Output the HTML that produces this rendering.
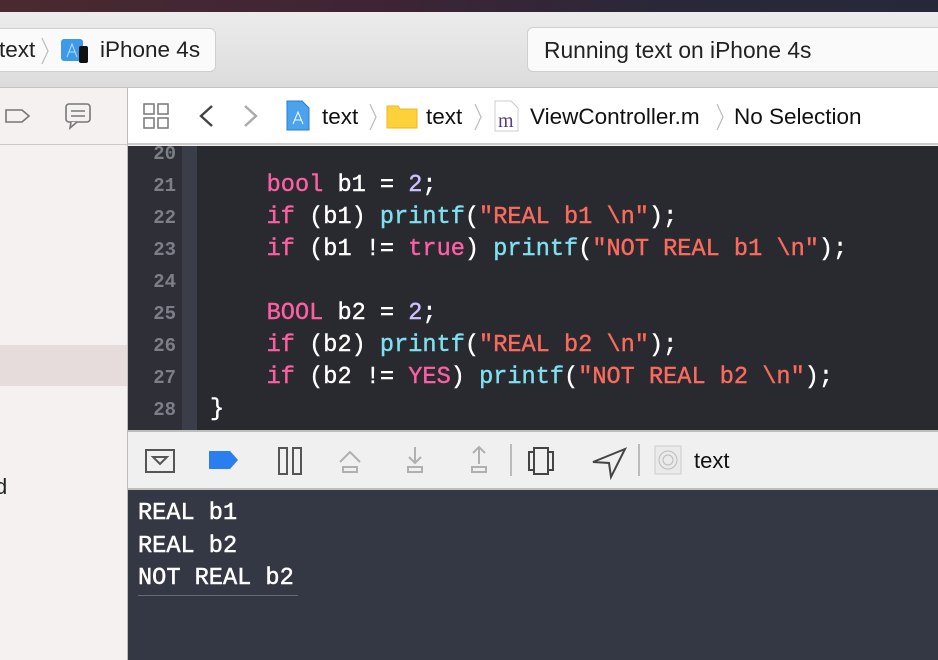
<!DOCTYPE html>
<html><head><meta charset="utf-8"><style>
*{margin:0;padding:0;box-sizing:border-box}
body{width:938px;height:660px;overflow:hidden;position:relative;background:#f4f1f0;font-family:"Liberation Sans",sans-serif}
.abs{position:absolute}
.mono{font-family:"Liberation Mono",monospace}
</style></head><body>
<div class="abs" style="left:0;top:0;width:938px;height:12px;background:linear-gradient(90deg,#4a2a30,#3e2434 40%,#2a2838 70%,#26283a)"></div>
<div class="abs" style="left:0;top:12px;width:938px;height:76px;background:linear-gradient(#ececec,#dcdcdc);border-bottom:1px solid #c4c4c4"></div>
<div class="abs" style="left:-10px;top:28px;width:226px;height:44px;background:#fafafa;border:1px solid #cfcfcf;border-radius:6px"></div>
<div class="abs" style="left:-1px;top:37px;font-size:22.5px;color:#222">text</div>
<svg class="abs" style="left:40px;top:36px" width="10" height="30"><path d="M2 2 L8 15 L2 28" stroke="#bbb" fill="none" stroke-width="1.2"/></svg>
<svg class="abs" style="left:60px;top:37px" width="32" height="28"><rect x="1" y="2" width="22" height="22" rx="3" fill="#3c9ae8"/><path d="M7 20 L12 7 L17 20 M9 15 H15" stroke="#bfe0ff" fill="none"/><rect x="19" y="9" width="9" height="17" rx="2" fill="#111"/></svg>
<div class="abs" style="left:100px;top:37px;font-size:22.5px;color:#222">iPhone 4s</div>
<div class="abs" style="left:527px;top:27px;width:430px;height:45px;background:#fafafa;border:1px solid #cfcfcf;border-radius:6px"></div>
<div class="abs" style="left:544px;top:37px;font-size:22.8px;color:#222">Running text on iPhone 4s</div>
<div class="abs" style="left:0;top:88px;width:127px;height:57px;background:#f4f1f0;border-bottom:1px solid #cbcbcb"></div>
<svg class="abs" style="left:0;top:100px" width="110" height="34"><path d="M6 10 H22 L29 16 L22 22 H6 Z" stroke="#777" fill="none" stroke-width="1.6"/><rect x="66" y="4" width="24" height="18" rx="3" stroke="#777" fill="none" stroke-width="1.6"/><path d="M71 22 L70 28 L77 22" stroke="#777" fill="#f4f1f0" stroke-width="1.6"/><path d="M71 11 H85 M71 16 H85" stroke="#777" stroke-width="1.6"/></svg>
<div class="abs" style="left:0;top:345px;width:127px;height:41px;background:#e6dcdc"></div>
<div class="abs" style="left:-5px;top:474px;font-size:22px;color:#222">d</div>
<div class="abs" style="left:127px;top:88px;width:1px;height:572px;background:#bdbdbd"></div>
<div class="abs" style="left:128px;top:88px;width:810px;height:57px;background:#fff;border-bottom:2px solid #cbcbcb"></div>
<svg class="abs" style="left:140px;top:100px" width="140" height="34"><g stroke="#777" fill="none" stroke-width="1.5"><rect x="4" y="4" width="10" height="10"/><rect x="18" y="4" width="10" height="10"/><rect x="4" y="18" width="10" height="10"/><rect x="18" y="18" width="10" height="10"/></g><path d="M72 6 L61 16 L72 26" stroke="#444" stroke-width="2.4" fill="none"/><path d="M105 6 L116 16 L105 26" stroke="#aaa" stroke-width="2.4" fill="none"/></svg>
<svg class="abs" style="left:284px;top:100px" width="30" height="32"><path d="M3 1 H18 L25 8 V30 H3 Z" fill="#4aa3ec" stroke="#2a7fc6"/><path d="M9 24 L14 12 L19 24 M11 20 H17" stroke="#fff" fill="none"/></svg>
<div class="abs" style="left:322px;top:104px;font-size:22.5px;color:#111">text</div>
<svg class="abs" style="left:368px;top:102px" width="10" height="30"><path d="M2 2 L8 15 L2 28" stroke="#bbb" fill="none" stroke-width="1.2"/></svg>
<svg class="abs" style="left:386px;top:103px" width="32" height="26"><path d="M1 3 H12 L14 6 H31 V25 H1 Z" fill="#fcd13a" stroke="#e9b820"/></svg>
<div class="abs" style="left:426px;top:104px;font-size:22.5px;color:#111">text</div>
<svg class="abs" style="left:473px;top:102px" width="10" height="30"><path d="M2 2 L8 15 L2 28" stroke="#bbb" fill="none" stroke-width="1.2"/></svg>
<svg class="abs" style="left:494px;top:100px" width="26" height="32"><path d="M1 1 H17 L24 8 V31 H1 Z" fill="#fff" stroke="#ccc"/><text x="4" y="27" font-family="Liberation Serif,serif" font-size="20" fill="#5a3d8a">m</text></svg>
<div class="abs" style="left:530px;top:104px;font-size:22.5px;color:#111">ViewController.m</div>
<svg class="abs" style="left:715px;top:102px" width="10" height="30"><path d="M2 2 L8 15 L2 28" stroke="#bbb" fill="none" stroke-width="1.2"/></svg>
<div class="abs" style="left:734px;top:104px;font-size:22.5px;color:#111">No Selection</div>
<div class="abs" style="left:128px;top:146px;width:810px;height:284px;background:#292a30"></div>
<div class="abs" style="left:128px;top:146px;width:54px;height:284px;background:#2f3037"></div>
<div class="abs" style="left:182px;top:146px;width:15px;height:284px;background:#3b3d48"></div>
<div class="abs mono" style="left:128px;top:138px;width:48px;text-align:right;font-size:19px;font-weight:bold;line-height:32px;color:#7d7f88">20<br>21<br>22<br>23<br>24<br>25<br>26<br>27<br>28</div>
<div class="abs mono" style="left:210px;top:170px;font-size:23.6px;line-height:32px;color:#fff;white-space:pre;-webkit-text-stroke:0.4px"><span style="color:#fc5fa3">    bool</span> b1 = <span style="color:#d0bfff">2</span>;
    <span style="color:#fc5fa3">if</span> (b1) <span style="color:#7ee0f0">printf</span>(<span style="color:#fc6a5d">"REAL b1 \n"</span>);
    <span style="color:#fc5fa3">if</span> (b1 != <span style="color:#fc5fa3">true</span>) <span style="color:#7ee0f0">printf</span>(<span style="color:#fc6a5d">"NOT REAL b1 \n"</span>);

    <span style="color:#fc5fa3">BOOL</span> b2 = <span style="color:#d0bfff">2</span>;
    <span style="color:#fc5fa3">if</span> (b2) <span style="color:#7ee0f0">printf</span>(<span style="color:#fc6a5d">"REAL b2 \n"</span>);
    <span style="color:#fc5fa3">if</span> (b2 != <span style="color:#fc5fa3">YES</span>) <span style="color:#7ee0f0">printf</span>(<span style="color:#fc6a5d">"NOT REAL b2 \n"</span>);
}</div>
<div class="abs" style="left:128px;top:430px;width:810px;height:60px;background:#f0f0f0;border-top:2px solid #bdbdbd;border-bottom:2px solid #bdbdbd"></div>
<svg class="abs" style="left:128px;top:432px" width="620" height="56">
<g fill="none" stroke="#555" stroke-width="2"><rect x="18" y="18" width="28" height="22"/><path d="M25 25 H39 L32 32 Z"/><rect x="151" y="16" width="8" height="26"/><rect x="165" y="16" width="8" height="26"/></g>
<path d="M81 19 H102 L110 28 L102 37 H81 Z" fill="#2b7ef0"/>
<g fill="none" stroke="#b0b0b0" stroke-width="2"><path d="M212 30 L222 20 L232 30"/><rect x="215" y="35" width="14" height="5"/><path d="M287 15 V30 M281 25 L287 31 L293 25"/><rect x="280" y="35" width="14" height="5"/><path d="M351 32 V16 M345 21 L351 15 L357 21"/><rect x="344" y="35" width="14" height="5"/></g>
<path d="M383 12 V44 M511 12 V44" stroke="#bbb" stroke-width="2"/>
<g fill="none" stroke="#444" stroke-width="2"><rect x="406" y="16" width="14" height="26"/><path d="M406 20 H401 V38 H406 M420 20 H425 V38 H420"/><path d="M497 17 L465 30 L481 31 L483 45 Z"/></g>
<rect x="527" y="14" width="26" height="28" fill="#eaeaea" stroke="#ccc"/><circle cx="540" cy="28" r="9" fill="none" stroke="#bbb"/><circle cx="540" cy="28" r="5" fill="none" stroke="#bbb"/>
<text x="566" y="36" font-family="Liberation Sans,sans-serif" font-size="22" fill="#111">text</text>
</svg>
<div class="abs" style="left:128px;top:490px;width:810px;height:170px;background:#343844"></div>
<div class="abs mono" style="left:138px;top:498px;font-size:23.6px;line-height:32.5px;color:#fff;white-space:pre;-webkit-text-stroke:0.5px">REAL b1
REAL b2
NOT REAL b2</div>
<div class="abs" style="left:138px;top:595px;width:160px;height:1px;background:#666a75"></div>
</body></html>
